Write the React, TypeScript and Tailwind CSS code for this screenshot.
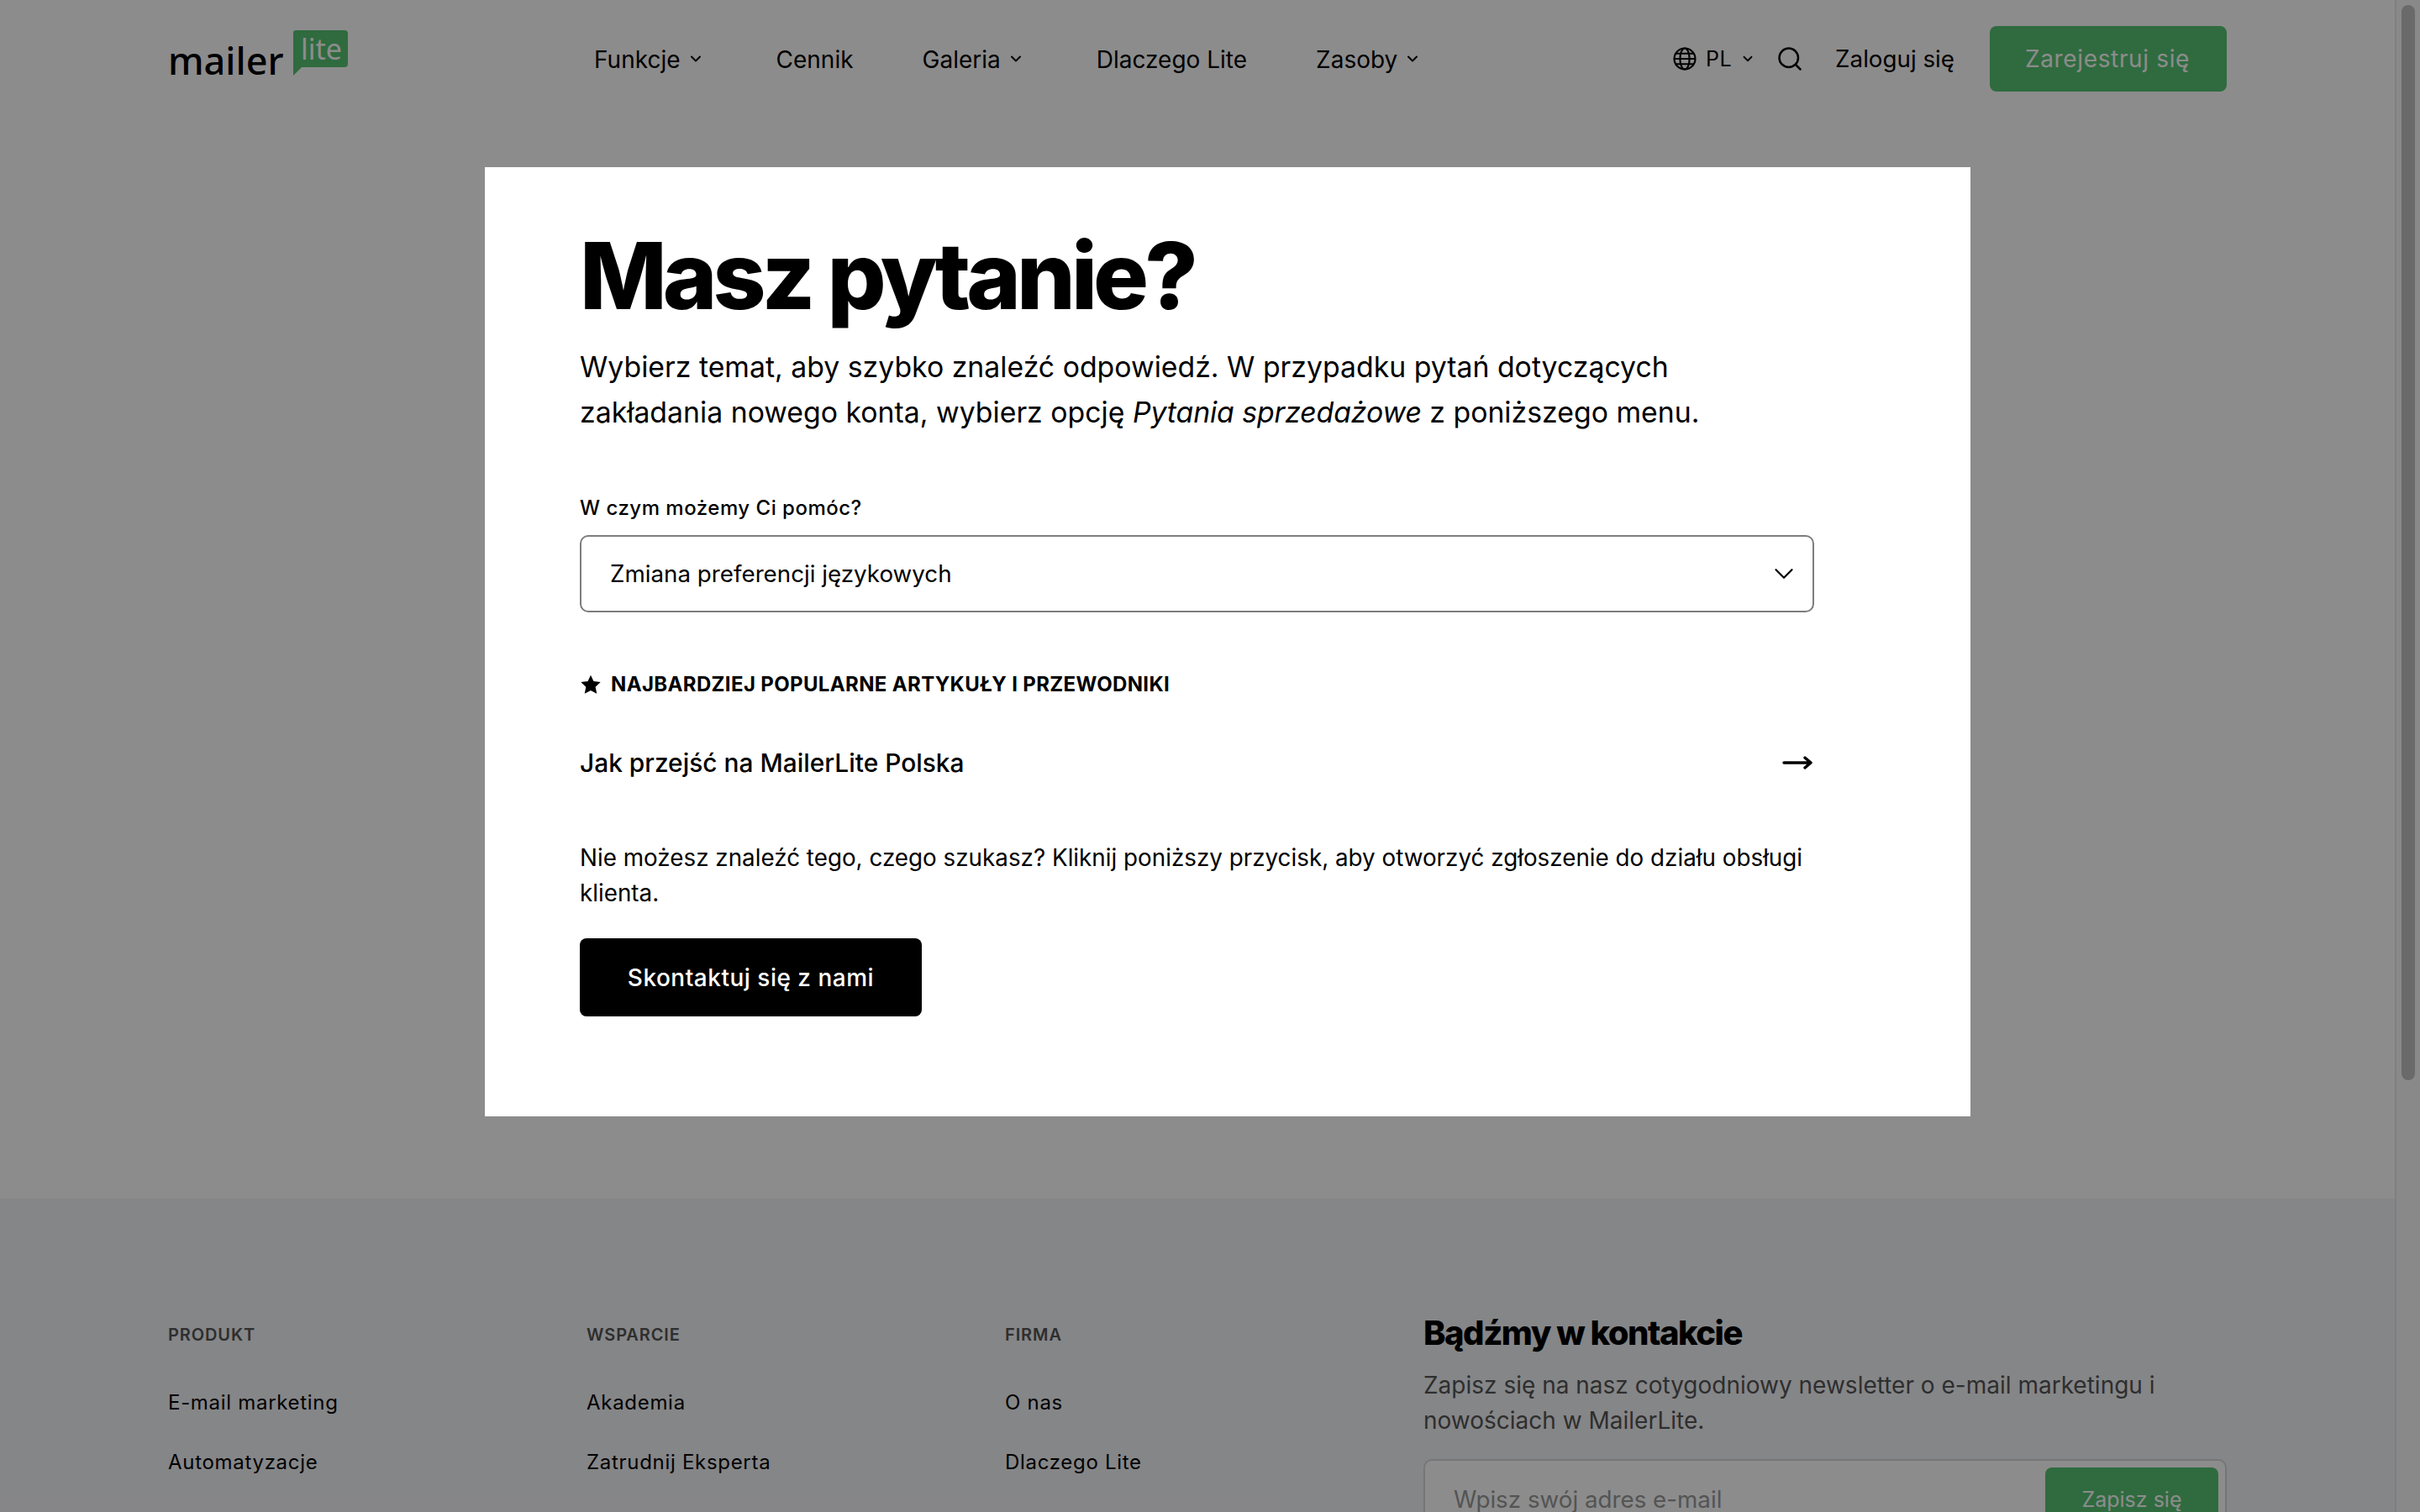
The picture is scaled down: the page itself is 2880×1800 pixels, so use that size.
const font = { fontFamily: "Inter, 'Liberation Sans', sans-serif" };

function Chevron({ className, width = 2.4 }: { className: string; width?: number }) {
  return (
    <svg viewBox="0 0 24 24" fill="none" stroke="currentColor" strokeWidth={width} strokeLinecap="round" strokeLinejoin="round" className={className}>
      <path d="M6 9l6 6 6-6" />
    </svg>
  );
}

function NavItem({ label, chevron }: { label: string; chevron?: boolean }) {
  return (
    <div className="flex items-center gap-[8px] text-[28px] text-black whitespace-nowrap">
      <span className="mt-[2px]">{label}</span>
      {chevron && <Chevron className="w-[20px] h-[20px] mr-[4px]" />}
    </div>
  );
}

function Logo() {
  return (
    <div className="flex items-end w-[214px] h-[56px] relative">
      <span className="text-[45px] leading-[45px] font-medium text-black" style={{ fontFamily: "'Noto Sans', sans-serif" }}>mailer</span>
      <svg viewBox="0 0 66 54" className="absolute left-[148px] top-[-2px] w-[66px] h-[54px]">
        <path d="M4 0h58a4 4 0 0 1 4 4v36a4 4 0 0 1-4 4H11L1 54V3a3 3 0 0 1 3-3z" fill="#57c373" />
      </svg>
      <span className="absolute left-[158px] top-[1px] text-[34px] leading-[38px] text-white" style={{ fontFamily: "'Noto Sans', sans-serif" }}>lite</span>
    </div>
  );
}

function FooterColumn({ title, links }: { title: string; links: string[] }) {
  return (
    <div className="w-[498px] shrink-0">
      <div className="text-[20px] leading-[24px] font-semibold tracking-[0.9px] text-[#555]">{title}</div>
      <div className="mt-[55px] flex flex-col gap-[43px]">
        {links.map((l) => (
          <div key={l} className="text-[24px] leading-[28px] tracking-[0.7px] text-black whitespace-nowrap">{l}</div>
        ))}
      </div>
    </div>
  );
}

export default function App() {
  return (
    <div className="relative w-[2880px] h-[1800px] overflow-hidden bg-white flex" style={font}>
      <div className="w-[2850px] h-full flex flex-col">
        <header className="h-[139px] shrink-0 px-[200px] pt-[31px] flex items-start">
          <div className="w-[507px] pt-[7px]"><Logo /></div>
          <nav className="flex items-center gap-[82px] h-[78px]">
            <NavItem label="Funkcje" chevron />
            <NavItem label="Cennik" />
            <NavItem label="Galeria" chevron />
            <NavItem label="Dlaczego Lite" />
            <NavItem label="Zasoby" chevron />
          </nav>
          <div className="ml-auto flex items-center h-[78px]">
            <svg viewBox="0 0 24 24" fill="none" stroke="currentColor" strokeWidth={1.7} className="w-[30px] h-[30px] text-black">
              <circle cx="12" cy="12" r="10" /><ellipse cx="12" cy="12" rx="4.5" ry="10" /><path d="M2 12h20M3.5 7h17M3.5 17h17" />
            </svg>
            <span className="ml-[10px] text-[25px] text-black tracking-[0.5px] mt-[1px]">PL</span>
            <Chevron className="ml-[10px] w-[18px] h-[18px] text-black" />
            <svg viewBox="0 0 24 24" fill="none" stroke="currentColor" strokeWidth={2} strokeLinecap="round" className="ml-[26px] w-[30px] h-[30px] text-black">
              <circle cx="11" cy="11" r="9" /><path d="M18 18l4 4" />
            </svg>
            <span className="ml-[39px] mt-[2px] text-[27.75px] text-black whitespace-nowrap">Zaloguj się</span>
            <div className="ml-[42px] w-[282px] h-[78px] rounded-[8px] bg-[#57c373] pr-[2px] flex items-center justify-center text-[28px] tracking-[0.65px] text-white whitespace-nowrap">Zarejestruj się</div>
          </div>
        </header>
        <main className="flex-1 bg-white" />
        <footer className="h-[373px] shrink-0 bg-[#f3f4f7] px-[200px] pt-[150px] flex">
          <FooterColumn title="PRODUKT" links={["E-mail marketing", "Automatyzacje"]} />
          <FooterColumn title="WSPARCIE" links={["Akademia", "Zatrudnij Eksperta"]} />
          <FooterColumn title="FIRMA" links={["O nas", "Dlaczego Lite"]} />
          <div className="flex-1 mt-[-14px]">
            <div className="text-[40px] leading-[48px] font-extrabold tracking-[-1.5px] text-black">Bądźmy w kontakcie</div>
            <p className="mt-[17px] text-[28px] leading-[42px] text-[#555]">Zapisz się na nasz cotygodniowy newsletter o e-mail marketingu i nowościach w MailerLite.</p>
            <div className="mt-[25px] h-[100px] rounded-[10px] border-2 border-[#d6d8dc] bg-white pl-[34px] pr-[8px] pt-[8px] flex">
              <span className="text-[27.75px] leading-[76px] text-[#999] flex-1">Wpisz swój adres e-mail</span>
              <div className="w-[206px] h-[78px] rounded-[8px] bg-[#57c373] flex items-center justify-center text-[25px] text-white">Zapisz się</div>
            </div>
          </div>
        </footer>
      </div>
      <div className="w-[30px] h-full bg-[#fafafa] border-l-2 border-[#e8e8e8] shrink-0" />
      <div className="absolute left-[2858px] top-[6px] w-[16px] h-[1280px] rounded-full bg-[#c1c1c1]" />
      <div className="absolute inset-0 bg-black/45" />
      <div className="absolute left-[577px] top-[199px] w-[1768px] h-[1130px] bg-white pl-[113px] pr-[188px] pt-[63px]">
        <h1 className="text-[110px] leading-[132px] font-extrabold tracking-[-5px] text-black whitespace-nowrap">Masz pytanie?</h1>
        <p className="mt-[16px] text-[33.8px] leading-[54px] text-black">
          Wybierz temat, aby szybko znaleźć odpowiedź. W przypadku pytań dotyczących<br />
          zakładania nowego konta, wybierz opcję <em className="tracking-[-0.1px]">Pytania sprzedażowe</em> z poniższego menu.
        </p>
        <label className="block mt-[72px] text-[24px] leading-[30px] font-medium tracking-[0.5px] text-black">W czym możemy Ci pomóc?</label>
        <div className="mt-[17px] w-[1469px] h-[92px] rounded-[10px] border-2 border-[#7d7d7d] pl-[34px] pr-[15px] flex items-center justify-between">
          <span className="mt-[1px] text-[27.75px] text-black">Zmiana preferencji językowych</span>
          <Chevron className="w-[38px] h-[38px] text-black" width={1.4} />
        </div>
        <div className="mt-[71px] flex items-center gap-[11px]">
          <svg viewBox="0 0 24 24" className="w-[26px] h-[26px] text-black" fill="currentColor">
            <path d="M12 1.5l3.2 6.9 7.6.9-5.6 5.2 1.5 7.5L12 18.4l-6.7 3.6 1.5-7.5L1.2 9.3l7.6-.9z" />
          </svg>
          <span className="text-[24px] leading-[30px] font-bold tracking-[0.35px] text-black whitespace-nowrap">NAJBARDZIEJ POPULARNE ARTYKUŁY I PRZEWODNIKI</span>
        </div>
        <div className="mt-[59px] w-[1467px] flex items-center justify-between">
          <span className="text-[29.9px] leading-[38px] font-medium text-black">Jak przejść na MailerLite Polska</span>
          <svg viewBox="0 0 36 24" fill="none" stroke="currentColor" strokeWidth={3.4} strokeLinecap="round" strokeLinejoin="round" className="w-[36px] h-[24px] text-black">
            <path d="M2 12h32M27 6l7 6-7 6" />
          </svg>
        </div>
        <p className="mt-[73px] w-[1467px] text-[27.8px] leading-[42px] text-black">Nie możesz znaleźć tego, czego szukasz? Kliknij poniższy przycisk, aby otworzyć zgłoszenie do działu obsługi klienta.</p>
        <div className="mt-[33px] w-[407px] h-[93px] rounded-[8px] bg-black flex items-center justify-center text-[28px] tracking-[0.5px] font-medium text-white whitespace-nowrap">Skontaktuj się z nami</div>
      </div>
    </div>
  );
}
